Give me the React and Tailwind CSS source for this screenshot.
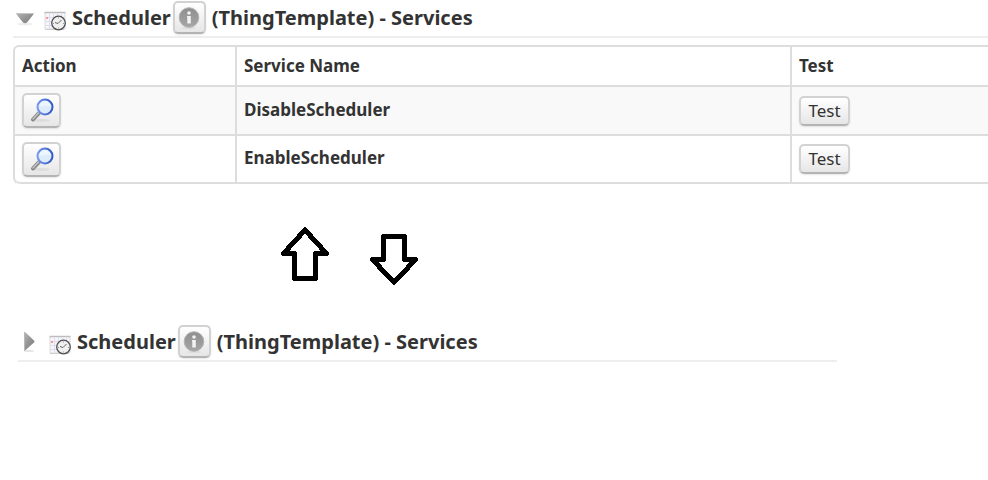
import { useId } from "react";

const services = ["DisableScheduler", "EnableScheduler"];

const buttonStyle =
  "flex items-center justify-center rounded-[5px] border-2 border-[#d2d2d2] border-b-[#b4b4b4] bg-linear-to-b from-white to-[#e6e6e6] shadow-[0_1px_2px_rgba(0,0,0,0.1)]";

function ToggleIcon({ open }) {
  const id = useId();
  return (
    <svg width="20" height="20" viewBox="0 0 20 20" aria-hidden="true">
      <defs>
        <linearGradient id={id} x1="0" y1="0" x2="1" y2="1">
          <stop offset="0" stopColor="#b8b8b8" />
          <stop offset="0.5" stopColor="#949494" />
          <stop offset="1" stopColor="#7c7c7c" />
        </linearGradient>
      </defs>
      {open ? (
        <>
          <ellipse cx="10" cy="16" rx="8" ry="1.5" fill="#eeeeee" />
          <path d="M1 5h18l-1 2-6 7.500q-2 1.500-4 0L2 7z" fill={`url(#${id})`} />
          <path d="M1 5.500h18" stroke="#c4c4c4" />
        </>
      ) : (
        <>
          <ellipse cx="9" cy="19" rx="5" ry="1" fill="#e4e4e4" />
          <path d="M4 0h1l9 8.500q1 1 0 2L5 18.500H4z" fill={`url(#${id})`} />
          <path d="M4.500 0.500v18" stroke="#b8b8b8" />
        </>
      )}
    </svg>
  );
}

function ScheduleIcon() {
  return (
    <svg width="22" height="20" viewBox="0 0 22 20" aria-hidden="true">
      <path d="M1 1.500h20v16.500H1z" fill="#f6f6fa" stroke="#dadae0" />
      <path d="M0.500 1.500h21" stroke="#bdbdc0" strokeWidth="1.500" />
      <path
        d="M1 6.500h20M1 10.500h12M1 14.500h8M5.500 3v15M9.500 3v15M13.500 3v6M17.500 3v4"
        stroke="#dedeec"
      />
      <path d="M2 6h2v2H2z" fill="#f59a9a" />
      <path d="M1 18.500h19" stroke="#cfcfcf" />
      <circle cx="14.500" cy="12" r="6.800" fill="#f0f0f0" stroke="#505050" strokeWidth="1.300" />
      <path d="M14 12.500l3.500-3.500M14 12.500l-3-1" stroke="#666666" fill="none" />
      <path
        d="M14.500 6.500v1M14.500 16.500v1M9 12.500h1M19 12.500h1"
        stroke="#999999"
      />
    </svg>
  );
}

function InfoIcon() {
  const id = useId();
  return (
    <svg width="22" height="22" viewBox="0 0 22 22" aria-hidden="true">
      <defs>
        <linearGradient id={id} x1="0" y1="0" x2="0" y2="1">
          <stop offset="0" stopColor="#8e8e8e" />
          <stop offset="1" stopColor="#a6a6a6" />
        </linearGradient>
      </defs>
      <ellipse cx="11" cy="21" rx="7" ry="1" fill="#dddddd" />
      <circle cx="11" cy="10.500" r="9.800" fill={`url(#${id})`} stroke="#b4b4b4" />
      <circle cx="11" cy="6" r="1.800" fill="#f2f2f2" />
      <path d="M9 9h3.800v7.500H9.300V10.500H9z" fill="#f2f2f2" />
    </svg>
  );
}

function MagnifierIcon() {
  const id = useId();
  return (
    <svg width="25" height="25" viewBox="0 0 25 25" aria-hidden="true">
      <defs>
        <linearGradient id={id} x1="0" y1="0" x2="1" y2="0">
          <stop offset="0" stopColor="#7597ef" />
          <stop offset="1" stopColor="#3456c4" />
        </linearGradient>
      </defs>
      <ellipse cx="12" cy="22.500" rx="9" ry="1.500" fill="#dcdcdc" />
      <path d="M10.500 14.500L4 21.500" stroke="#858585" strokeWidth="4" strokeLinecap="round" />
      <path d="M10 14.500L4 21" stroke="#c4c4c4" strokeWidth="1.500" strokeLinecap="round" />
      <circle cx="16" cy="9" r="7.500" fill="#dcecfb" stroke={`url(#${id})`} strokeWidth="2" />
      <path d="M10.500 9a5.500 5.500 0 0 1 11-1q-5-1-11 1z" fill="#edf5fe" />
    </svg>
  );
}

function SectionHeader({ open }) {
  return (
    <div className="flex h-9 items-center border-b-2 border-[#eeeeee] pb-[3px] pl-[2px]">
      <button type="button" aria-label="Toggle services" aria-expanded={open}>
        <ToggleIcon open={open} />
      </button>
      <span className="mt-1.5 mr-1.5 ml-[9px]">
        <ScheduleIcon />
      </span>
      <h2 className="flex items-center text-xl leading-8 font-bold whitespace-nowrap">
        Scheduler
        <button
          type="button"
          aria-label="Template info"
          className={`mr-1.5 ml-[2px] size-[33px] ${buttonStyle}`}
        >
          <InfoIcon />
        </button>
        (ThingTemplate) - Services
      </h2>
    </div>
  );
}

function ServicesTable() {
  const cell = "border-r-2 border-b-2 border-[#dddddd] px-[7px] text-left align-middle last:border-r-0";

  return (
    <table className="w-full table-fixed border-separate border-spacing-0 rounded-l-md border-t-2 border-l-2 border-[#dddddd] text-[17px] leading-6">
      <thead>
        <tr className="h-10">
          <th className={`w-[222px] rounded-tl ${cell}`}>Action</th>
          <th className={`w-[555px] ${cell}`}>Service Name</th>
          <th className={cell}>Test</th>
        </tr>
      </thead>
      <tbody>
        {services.map((name) => (
          <tr
            key={name}
            className="h-[49px] odd:bg-[#f9f9f9] last:h-12 last:[&>td:first-child]:rounded-bl-md"
          >
            <td className={cell}>
              <button
                type="button"
                aria-label={`View ${name}`}
                className={`h-[35px] w-[39px] ${buttonStyle}`}
              >
                <MagnifierIcon />
              </button>
            </td>
            <td className={`pb-[2px] font-bold ${cell}`}>{name}</td>
            <td className={cell}>
              <button type="button" className={`h-[30px] w-[51px] ${buttonStyle}`}>
                Test
              </button>
            </td>
          </tr>
        ))}
      </tbody>
    </table>
  );
}

function Arrows() {
  return (
    <div className="mt-[43px] flex gap-10 pl-[267px]">
      <svg width="50" height="58" viewBox="280 227 50 58" aria-hidden="true" shapeRendering="crispEdges">
        <path
          d="M305 230L283.500 253.500H294.500V278.500H315.500V253.500H326.500Z"
          fill="none"
          stroke="#000000"
          strokeWidth="5"
          strokeLinejoin="round"
        />
      </svg>
      <svg width="50" height="58" viewBox="370 227 50 58" aria-hidden="true" shapeRendering="crispEdges">
        <path
          d="M394 282.500L372.500 259.500H383.500V236.500H404.500V259.500H415.500Z"
          fill="none"
          stroke="#000000"
          strokeWidth="5"
          strokeLinejoin="round"
        />
      </svg>
    </div>
  );
}

export default function App() {
  return (
    <main className="min-h-screen overflow-hidden bg-white pt-0.5 pl-[13px] font-['Noto_Sans','Open_Sans',sans-serif] text-[#333333]">
      <section>
        <SectionHeader open />
        <div className="mt-[7px]">
          <ServicesTable />
        </div>
      </section>
      <Arrows />
      <section className="mt-[41px] ml-[5px] max-w-[819px]">
        <SectionHeader open={false} />
      </section>
    </main>
  );
}
